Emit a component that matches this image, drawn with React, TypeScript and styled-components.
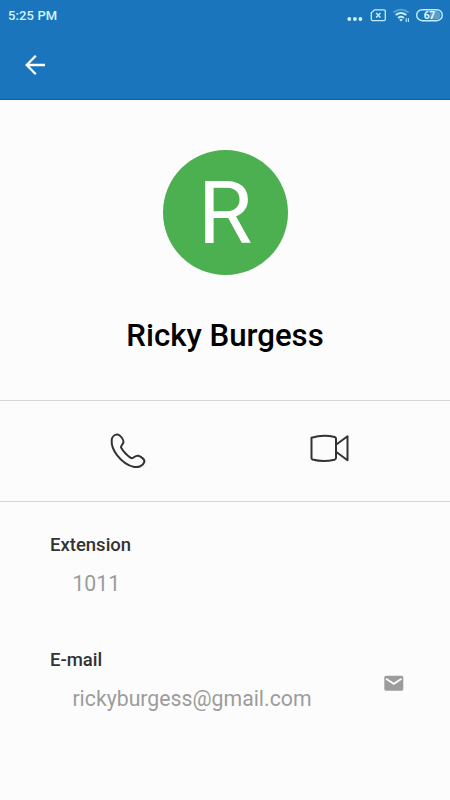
import React from 'react';
import styled, { createGlobalStyle } from 'styled-components';

const GlobalStyle = createGlobalStyle`
  * { box-sizing: border-box; }
  body { margin: 0; background: #fcfcfc; font-family: Roboto, sans-serif; }
`;

const Screen = styled.main`
  width: 450px;
  height: 800px;
  display: flex;
  flex-direction: column;
  background: #fcfcfc;
  overflow: hidden;
`;

const Header = styled.header`
  height: 100px;
  flex: none;
  background: #1b75bc;
  border-bottom: 1px solid #15609f;
`;

const StatusBar = styled.div`
  height: 30px;
  padding: 0 7px 0 8px;
  display: flex;
  align-items: center;
  justify-content: space-between;
  color: #d0f5ff;
`;

const Clock = styled.span`
  padding-top: 1px;
  font-size: 13px;
  font-weight: 500;
  line-height: 30px;
  letter-spacing: 0.12px;
`;

const StatusIcons = styled.svg`
  display: block;
  width: 100px;
  height: 30px;
`;

const BatteryLevel = styled.text`
  font: 700 10.4px Roboto, sans-serif;
  letter-spacing: -0.4px;
  fill: #e2fbff;
`;

const Toolbar = styled.nav`
  height: 70px;
  padding: 23px 0 0 23px;
`;

const IconButton = styled.button`
  display: block;
  padding: 0;
  border: 0;
  background: none;
  color: inherit;
  line-height: 0;
`;

const Profile = styled.section`
  height: 300px;
  flex: none;
  padding-top: 50px;
  display: flex;
  flex-direction: column;
  align-items: center;
`;

const Avatar = styled.div`
  width: 125px;
  height: 125px;
  border-radius: 50%;
  background: #4caf50;
  color: #fff;
  font-size: 88px;
  line-height: 125px;
  text-align: center;
`;

const Name = styled.h1`
  margin: 43px 0 0;
  font-size: 31.2px;
  font-weight: 500;
  line-height: 36px;
  color: #000;
`;

const Actions = styled.section`
  height: 102px;
  flex: none;
  display: grid;
  grid-template-columns: 1fr 1fr;
  align-items: start;
  border-top: 1px solid #d6d6d6;
  border-bottom: 1px solid #d6d6d6;
  color: #333;
`;

const Action = styled(IconButton)<{ $left: number }>`
  padding: 24px 0 0 ${({ $left }) => $left}px;
  text-align: left;
`;

const Details = styled.section`
  display: flex;
  flex-direction: column;
  padding: 30px 45px 0 50px;
`;

const Field = styled.div`
  height: 115px;
  display: flex;
  justify-content: space-between;
`;

const Label = styled.div`
  font-size: 18.5px;
  font-weight: 500;
  line-height: 27px;
  color: #333;
`;

const Value = styled.div`
  padding-left: 22.4px;
  margin-top: 11px;
  font-size: 21.25px;
  line-height: 28px;
  color: #9c9c9c;
`;

const MailButton = styled(IconButton)`
  align-self: flex-start;
  margin-top: 25px;
`;

export default function App() {
  return (
    <>
      <GlobalStyle />
      <Screen>
        <Header>
          <StatusBar>
            <Clock>5:25 PM</Clock>
            <StatusIcons viewBox="343 0 100 30" fill="none" stroke="#c0effc">
              <g fill="#d0f5ff" stroke="none">
                <circle cx="349.3" cy="19" r="1.9" />
                <circle cx="354.9" cy="19" r="1.9" />
                <circle cx="360.4" cy="19" r="1.9" />
              </g>
              <path d="M374.5 9.8H384a1.3 1.3 0 0 1 1.3 1.3v8.2a1.3 1.3 0 0 1-1.3 1.3h-11.4a1.3 1.3 0 0 1-1.3-1.3v-6.4z" strokeWidth="1.3" />
              <path d="m376.2 13 4.2 4.4m0-4.4-4.2 4.4" strokeWidth="1.5" />
              <path d="M393.3 12.7q7.7-6.2 15.4 0" stroke="#5da5d5" strokeWidth="1.7" />
              <path d="M395.7 15.1q5.3-4.4 10.6 0M398.1 18q2.9-2.4 5.8 0" strokeWidth="1.9" />
              <path d="m399.2 19.5 1.8 2 1.8-2q-1.8-1.2-3.6 0" fill="#d0f5ff" stroke="none" />
              <path d="M406.2 18.3v3.8m2.2-3.8v3.8" strokeWidth="1.1" />
              <rect x="416.7" y="9.7" width="25.6" height="11" rx="5.5" strokeWidth="1.4" />
              <path d="M430 11h6.3a4.2 4.2 0 0 1 0 8.4H430z" fill="#5a9fd2" stroke="none" />
              <BatteryLevel x="429.2" y="18.8" textAnchor="middle" stroke="none">67</BatteryLevel>
            </StatusIcons>
          </StatusBar>
          <Toolbar>
            <IconButton aria-label="Back">
              <svg width="24" height="24" viewBox="23 53 24 24" fill="none" stroke="#fff" strokeWidth="2.3">
                <path d="M45 65H27m8.8-9.2L26.7 65l9.1 9.2" />
              </svg>
            </IconButton>
          </Toolbar>
        </Header>
        <Profile>
          <Avatar>R</Avatar>
          <Name>Ricky Burgess</Name>
        </Profile>
        <Actions>
          <Action $left={105} aria-label="Voice call">
            <svg width="46" height="50" viewBox="105 425 46 50" fill="none" stroke="currentColor" strokeWidth="2" strokeLinejoin="round">
              <path d="M117.7 434.6C114.2 434.4 112 437 111.7 440C111.3 445 113.3 450.4 117.2 455.3C121.6 461 128.2 465.7 134.2 466.9C138.2 467.7 143 466 144.3 462.1C145.2 459.3 140.5 456.4 138.3 455.8C135.2 455 134 458.3 131.8 458.2C129 457.5 122.3 450.5 121 447.4C120.5 445.5 123.5 444.2 123.5 441.7C123.3 439 120.2 434.9 117.7 434.6Z" />
            </svg>
          </Action>
          <Action $left={80} aria-label="Video call">
            <svg width="50" height="50" viewBox="305 425 50 50" fill="none" stroke="currentColor" strokeWidth="2" strokeLinejoin="round">
              <path d="M311.5 437.7Q323 434.2 334.7 437Q336 437.4 336 438.8V457.8Q336 459.3 334.5 459.7Q323 462.4 312.6 459.5Q311.5 459.1 311.5 458ZM336 444.8 347.5 436.2V460.2L336 451.7" />
            </svg>
          </Action>
        </Actions>
        <Details>
          <Field>
            <div>
              <Label>Extension</Label>
              <Value>1011</Value>
            </div>
          </Field>
          <Field>
            <div>
              <Label>E-mail</Label>
              <Value>rickyburgess@gmail.com</Value>
            </div>
            <MailButton aria-label="Send e-mail">
              <svg width="22" height="22" viewBox="383 672 22 22">
                <rect x="384.3" y="675.7" width="19" height="15" rx="1.7" fill="#9c9c9c" />
                <path d="m386 678.8 7.8 5 7.8-5" fill="none" stroke="#fcfcfc" strokeWidth="1.9" />
              </svg>
            </MailButton>
          </Field>
        </Details>
      </Screen>
    </>
  );
}
